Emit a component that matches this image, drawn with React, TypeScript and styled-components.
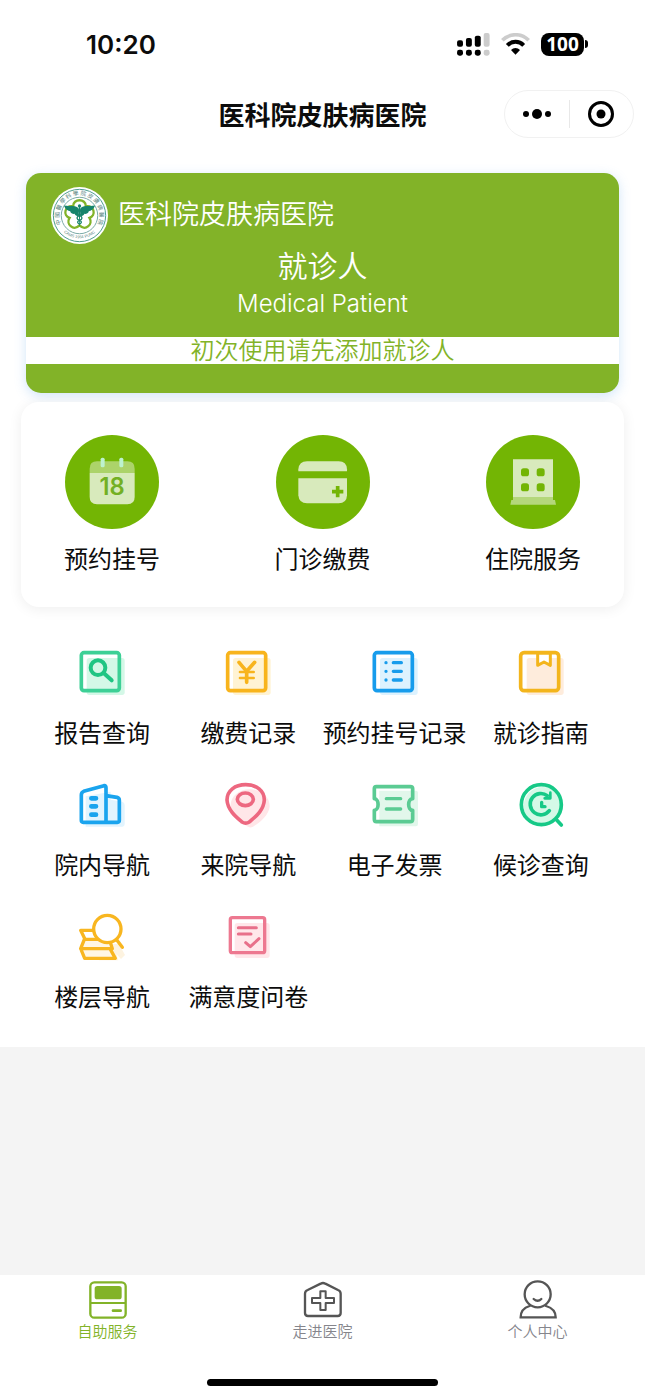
import React from "react";
import styled, { createGlobalStyle } from "styled-components";

const GlobalStyle = createGlobalStyle`
  *, *::before, *::after { box-sizing: border-box; }
  body {
    margin: 0;
    background: #f4f4f4;
    color: #0c0c0c;
    font-family: "Noto Sans CJK SC", sans-serif;
  }
  button { font: inherit; color: inherit; border: 0; background: none; padding: 0; cursor: pointer; }
  a { color: inherit; text-decoration: none; }
  h1, h2, p { margin: 0; font-weight: inherit; }
  svg { display: block; }
`;

const Page = styled.div`
  min-height: 100vh;
  display: flex;
  flex-direction: column;
`;

const StatusBar = styled.div`
  height: 88px;
  padding: 0 57px 0 86px;
  display: flex;
  align-items: center;
  justify-content: space-between;
  background: #fff;
`;

const Clock = styled.time`
  padding-top: 1px;
  font: 600 26px/32px Inter, sans-serif;
`;

const Indicators = styled.div`
  display: flex;
  align-items: center;
  gap: 11px;
`;

const Battery = styled.div`
  display: flex;
  align-items: center;
  gap: 1px;
`;

const BatteryBody = styled.span`
  width: 43px;
  height: 23px;
  border-radius: 8px;
  background: #000;
  color: #fff;
  text-align: center;
  font: 700 19px/23px "Noto Sans", sans-serif;
`;

const BatteryCap = styled.span`
  width: 3px;
  height: 8px;
  border-radius: 0 4px 4px 0;
  background: #000;
`;

const NavBar = styled.header`
  padding: 2px 11px 35px;
  display: grid;
  grid-template-columns: 1fr auto 1fr;
  align-items: center;
  background: #fff;
`;

const NavTitle = styled.h1`
  grid-column: 2;
  font-size: 26px;
  line-height: 38px;
  font-weight: 700;
`;

const Capsule = styled.div`
  justify-self: end;
  width: 130px;
  height: 48px;
  display: flex;
  align-items: center;
  border: 1px solid #f1f1f1;
  border-radius: 24px;
`;

const CapsuleButton = styled.button`
  flex: 1;
  display: flex;
  justify-content: center;
  & + & { border-left: 1px solid #e8e8e8; }
`;

const Content = styled.main`
  padding-bottom: 33px;
  background: #fff;
`;

const PatientCard = styled.section`
  margin: 0 26px;
  padding: 14px 0 29px;
  border-radius: 15px;
  background: #82b328;
  color: #fff;
  box-shadow: 0 3px 12px rgba(90, 160, 230, 0.28);
  text-align: center;
  font-weight: 350;
`;

const CardHead = styled.div`
  display: flex;
  align-items: center;
  gap: 10px;
  padding-left: 25px;
`;

const HospitalName = styled.p`
  font-size: 27px;
  line-height: 40px;
  padding-bottom: 6px;
`;

const CardTitle = styled.h2`
  font-size: 30px;
  line-height: 40px;
`;

const CardSubtitle = styled.p`
  font: 300 24px/40px Inter, sans-serif;
  padding-bottom: 13px;
`;

const AddPatient = styled.button`
  display: block;
  width: 100%;
  padding-bottom: 3px;
  background: #fff;
  color: #82b328;
  font-size: 24px;
  line-height: 24px;
`;

const ServicePanel = styled.section`
  margin: 9px 21px 0;
  padding: 33px 43px 31px;
  display: flex;
  justify-content: space-between;
  border-radius: 18px;
  background: #fff;
  box-shadow: 0 2px 14px rgba(0, 0, 0, 0.07);
`;

const ServiceLink = styled.a`
  display: flex;
  flex-direction: column;
  align-items: center;
  gap: 11px;
  font-size: 24px;
  line-height: 36px;
`;

const FeatureGrid = styled.nav`
  margin: 42px 31px 0 29px;
  display: grid;
  grid-template-columns: repeat(4, 1fr);
  row-gap: 31px;
`;

const FeatureLink = styled.a`
  display: flex;
  flex-direction: column;
  align-items: center;
  gap: 17px;
  white-space: nowrap;
  font-size: 24px;
  line-height: 36px;
`;

const Footer = styled.footer`
  margin-top: auto;
  padding: 5px 0 12px;
  background: #fff;
`;

const TabBar = styled.nav`
  display: grid;
  grid-template-columns: repeat(3, 1fr);
`;

const Tab = styled.a<{ $active?: boolean }>`
  display: flex;
  flex-direction: column;
  align-items: center;
  font-size: 15px;
  line-height: 22px;
  font-weight: 350;
  color: ${(p) => (p.$active ? "#82b328" : "#85858c")};
`;

const HomeIndicator = styled.div`
  width: 231px;
  height: 7px;
  margin: 37px auto 0;
  border-radius: 4px;
  background: #000;
`;

const SignalIcon = () => (
  <svg width="33" height="23" viewBox="53 35 100 70" aria-hidden="true">
    <g fill="#000">
      <rect x="53" y="57" width="18" height="20" rx="6" />
      <rect x="80" y="50" width="18" height="27" rx="6" />
      <rect x="107" y="43" width="18" height="34" rx="6" />
      <rect x="53" y="86" width="18" height="18" rx="7" />
      <rect x="80" y="86" width="18" height="18" rx="7" />
      <rect x="107" y="86" width="18" height="18" rx="7" />
    </g>
    <g fill="#ccc">
      <rect x="134" y="35" width="18" height="42" rx="6" />
      <rect x="134" y="86" width="18" height="18" rx="7" />
    </g>
  </svg>
);

const WifiIcon = () => (
  <svg width="29" height="22" viewBox="185 37 87 66" fill="none" aria-hidden="true">
    <path d="M189 59A55 55 0 0 1 268 59" stroke="#ccc" strokeWidth="11" />
    <path d="M204 74A34 34 0 0 1 253 74" stroke="#000" strokeWidth="12" />
    <path d="M228.500 102L215 88A19 19 0 0 1 242 88Z" fill="#000" />
  </svg>
);

const wing = "M84 66C76 53 60 60 39 56C43 68 52 72 58 73C59 79 66 82 71 81C73 88 80 88 84 88Z";

const HospitalLogo = () => (
  <svg width="57" height="57" viewBox="0 0 172 172" aria-hidden="true">
    <defs>
      <path id="ring-top" d="M42.900 129.100A61 61 0 1 1 129.100 129.100" />
      <path id="ring-bottom" d="M27 124A72 72 0 0 0 145 124" />
    </defs>
    <circle cx="86" cy="86" r="86" fill="#fff" />
    <circle cx="86" cy="86" r="79" fill="none" stroke="#4d9c8d" strokeWidth="3" />
    <circle cx="86" cy="86" r="55" fill="none" stroke="#79a9a5" strokeWidth="3" />
    <path
      d="M67 58C66 34 106 34 105 58C131 55 137 86 116 93C128 112 105 134 86 116C67 134 44 112 56 93C35 86 41 55 67 58Z"
      fill="#fff"
      stroke="#82b328"
      strokeWidth="7"
    />
    <g fill="#17846b">
      <path d={wing} />
      <path d={wing} transform="translate(172 0) scale(-1 1)" />
      <circle cx="86" cy="57" r="5" />
      <path d="M84 60H88L87 118H85Z" />
    </g>
    <path
      d="M78 68C98 74 98 82 86 86C76 90 76 97 86 101C94 104 93 109 86 112M94 68C74 74 74 82 86 86C96 90 96 97 86 101C78 104 79 109 86 112"
      fill="none"
      stroke="#17846b"
      strokeWidth="4"
    />
    <text fontSize="17" fill="#557f7b" fontWeight="400" textAnchor="middle">
      <textPath href="#ring-top" startOffset="50%">中 國 醫 學 科 學 院 皮 膚 病 醫 院</textPath>
    </text>
    <text fontSize="12" fill="#557f7b" fontFamily="Liberation Sans, sans-serif" textAnchor="middle">
      <textPath href="#ring-bottom" startOffset="50%">CAMS 1954 PUMC</textPath>
    </text>
  </svg>
);

const Disc = ({ viewBox, cx, cy, children }: { viewBox: string; cx: number; cy: number; children: React.ReactNode }) => (
  <svg width="94" height="94" viewBox={viewBox} aria-hidden="true">
    <circle cx={cx} cy={cy} r="141" fill="#73b504" />
    {children}
  </svg>
);

const CalendarIcon = () => (
  <Disc viewBox="43 29 282 282" cx={184} cy={170}>
    <path d="M117 143V130Q117 108 139 108H230Q252 108 252 130V143Z" fill="#acd36a" />
    <path d="M117 143H252V215Q252 237 230 237H139Q117 237 117 215Z" fill="#d8eabc" />
    <rect x="150" y="97" width="12" height="29" rx="5" fill="#bdf2cf" />
    <rect x="206" y="97" width="12" height="29" rx="5" fill="#bdf2cf" />
    <text x="184" y="210" textAnchor="middle" fontFamily="Inter, sans-serif" fontWeight="600" fontSize="71" fill="#73b023">18</text>
  </Disc>
);

const PaymentCardIcon = () => (
  <Disc viewBox="678 29 282 282" cx={819} cy={170}>
    <path d="M745 138V132Q747 108 771 108H866Q890 108 891 132V138Z" fill="#d8eabc" />
    <path d="M745 159H891V210Q890 234 866 234H771Q747 234 745 210Z" fill="#d8eabc" />
    <path d="M863 182V216M846 199H880" stroke="#73b504" strokeWidth="11" />
  </Disc>
);

const WardIcon = () => (
  <Disc viewBox="45 32 282 282" cx={186} cy={173}>
    <path d="M126 105H246V218H126Z" fill="#d8eabc" />
    <path d="M126 218H246V227H252L255 241H118L121 227H126Z" fill="#b4d77b" />
    <g fill="#73b504">
      <rect x="150" y="132" width="24" height="24" rx="8" />
      <rect x="197" y="132" width="24" height="24" rx="8" />
      <rect x="150" y="177" width="24" height="24" rx="8" />
      <rect x="197" y="177" width="24" height="24" rx="8" />
    </g>
  </Disc>
);

const FeatureSvg = styled.svg.attrs({ width: 48, height: 48, fill: "none", "aria-hidden": true })`
  stroke-linecap: round;
  stroke-linejoin: round;
`;

const ReportIcon = () => (
  <FeatureSvg viewBox="57 30 144 144">
    <rect x="83" y="57" width="114" height="111" rx="8" fill="#d4f8e7" />
    <rect x="67" y="41" width="114" height="114" rx="8" stroke="#3dd096" strokeWidth="11" />
    <circle cx="117" cy="86" r="22" stroke="#20c583" strokeWidth="12" />
    <path d="M134 102L158 124" stroke="#20c583" strokeWidth="12" />
  </FeatureSvg>
);

const BillIcon = () => (
  <FeatureSvg viewBox="495 30 144 144">
    <rect x="522" y="57" width="113" height="111" rx="8" fill="#fff3d3" />
    <rect x="506" y="41" width="114" height="114" rx="8" stroke="#f8b41c" strokeWidth="11" />
    <path d="M540 70L563 97L587 70M563 97V130" stroke="#f8b41c" strokeWidth="11" />
    <path d="M543 99H584M543 117H584" stroke="#f8b41c" strokeWidth="8" />
  </FeatureSvg>
);

const ListIcon = () => (
  <FeatureSvg viewBox="33 30 144 144">
    <rect x="60" y="57" width="113" height="111" rx="8" fill="#ddf2fe" />
    <rect x="43" y="41" width="114" height="114" rx="8" stroke="#179cec" strokeWidth="11" />
    <path d="M78 71V71.100M78 97V97.100M78 123V123.100M100 71H124M100 97H124M100 123H124" stroke="#179cec" strokeWidth="10" />
  </FeatureSvg>
);

const GuideIcon = () => (
  <FeatureSvg viewBox="471 30 144 144">
    <rect x="500" y="57" width="111" height="111" rx="8" fill="#feecdc" />
    <path d="M533 42V79L552 69L571 79V42Z" fill="#fff" stroke="#f3b51c" strokeWidth="9" />
    <rect x="482" y="41" width="114" height="114" rx="10" stroke="#f3b51c" strokeWidth="11" />
  </FeatureSvg>
);

const BuildingIcon = () => (
  <FeatureSvg viewBox="57 36 144 144">
    <path d="M80 82L155 68V92L190 98Q197 100 197 108V166Q197 173 190 173H80Z" fill="#e2f4fe" />
    <path d="M67 78Q67 70 74 67L135 50Q141 49 141 56V160H73Q67 160 67 154ZM141 80L174 85Q181 87 181 94V154Q181 160 175 160H141" stroke="#1aa4ee" strokeWidth="11" />
    <path d="M97 88H111M97 112H111M97 137H111" stroke="#1aa4ee" strokeWidth="14" />
  </FeatureSvg>
);

const PinIcon = () => (
  <FeatureSvg viewBox="495 36 144 144">
    <path d="M572 61C607 61 632 82 632 112C630 140 600 163 582 173Q573 178 564 172C545 160 515 135 515 109C515 82 540 61 572 61Z" fill="#ffe6e8" />
    <path d="M560 47C593 47 616 65 616 93C614 125 588 144 571 159Q560 166 549 159C533 145 506 124 504 93C504 65 528 47 560 47Z" stroke="#ed6880" strokeWidth="11" />
    <ellipse cx="559" cy="91" rx="24" ry="19" stroke="#ed6880" strokeWidth="11" />
  </FeatureSvg>
);

const TicketIcon = () => (
  <FeatureSvg viewBox="33 36 144 144">
    <path d="M58 65H168Q174 65 174 71V165Q174 172 168 172H58Z" fill="#e2f7eb" />
    <path d="M43 59Q43 53 49 53H151Q158 53 158 59V89C142 90 142 123 158 124V151Q158 158 151 158H49Q43 158 43 151V124C58 123 58 90 43 89Z" stroke="#5bcb93" strokeWidth="11" />
    <path d="M79 89H122M79 120H122" stroke="#5bcb93" strokeWidth="10" />
  </FeatureSvg>
);

const QueueIcon = () => (
  <FeatureSvg viewBox="471 36 144 144">
    <circle cx="548" cy="111" r="57" fill="#d4f9e7" />
    <circle cx="544" cy="107" r="60" stroke="#16c987" strokeWidth="11" />
    <path d="M588 151L604 168" stroke="#16c987" strokeWidth="11" />
    <path d="M568 125A32 32 0 1 1 562 80" stroke="#16c987" strokeWidth="11" />
    <path d="M571 71V88H554" stroke="#16c987" strokeWidth="8" />
    <path d="M545 100V113H555" stroke="#16c987" strokeWidth="10" />
  </FeatureSvg>
);

const FloorIcon = () => (
  <FeatureSvg viewBox="57 42 144 144">
    <path d="M140 135H180L198 168L186 180L172 165L178 184H120Z" fill="#fdf3e0" />
    <path d="M76 121H151L160 149H65ZM65 149H153L169 178H77Z" fill="#fff6e4" stroke="#f8b620" strokeWidth="10" />
    <path d="M104 94H65L78 121" stroke="#f8b620" strokeWidth="10" />
    <circle cx="145" cy="90" r="41" fill="#fff" stroke="#f8b620" strokeWidth="10" />
    <path d="M174 124L190 145" stroke="#f8b620" strokeWidth="10" />
  </FeatureSvg>
);

const SurveyIcon = () => (
  <FeatureSvg viewBox="495 42 144 144">
    <rect x="527" y="72" width="105" height="105" rx="8" fill="#ffe7ea" />
    <rect x="514" y="56" width="103" height="105" rx="6" stroke="#ed7890" strokeWidth="10" />
    <path d="M538 86H592M538 105H576M560 131L574 143L600 119" stroke="#e8708a" strokeWidth="9" />
  </FeatureSvg>
);

const KioskIcon = () => (
  <svg width="40" height="40" viewBox="82 32 120 120" fill="none" aria-hidden="true">
    <rect x="89" y="39" width="106" height="106" rx="12" stroke="#82b328" strokeWidth="7" />
    <rect x="102" y="50" width="81" height="40" rx="8" fill="#82b328" />
    <path d="M89 101H195" stroke="#82b328" strokeWidth="6" />
    <path d="M157 124H180" stroke="#82b328" strokeWidth="8" strokeLinecap="round" />
  </svg>
);

const HospitalIcon = () => (
  <svg width="40" height="40" viewBox="727 32 120 120" fill="none" stroke="#555" strokeWidth="7" strokeLinejoin="round" aria-hidden="true">
    <path d="M733 73Q733 65 741 62L780 43Q787 39 794 43L832 62Q840 65 840 73V131Q840 140 831 140H742Q733 140 733 131Z" />
    <path d="M779 66H795V86H820V101H795V122H779V101H754V86H779Z" strokeWidth="6" />
  </svg>
);

const ProfileIcon = () => (
  <svg width="40" height="40" viewBox="111 32 120 120" fill="none" stroke="#555" strokeWidth="7" strokeLinecap="round" aria-hidden="true">
    <circle cx="170" cy="75" r="39" />
    <path d="M158 89Q170 100 181 89" />
    <path d="M146 110C129 115 119 126 119 144H224C224 126 212 115 195 110" />
  </svg>
);

const services = [
  { label: "预约挂号", Icon: CalendarIcon },
  { label: "门诊缴费", Icon: PaymentCardIcon },
  { label: "住院服务", Icon: WardIcon },
];

const features = [
  { label: "报告查询", Icon: ReportIcon },
  { label: "缴费记录", Icon: BillIcon },
  { label: "预约挂号记录", Icon: ListIcon },
  { label: "就诊指南", Icon: GuideIcon },
  { label: "院内导航", Icon: BuildingIcon },
  { label: "来院导航", Icon: PinIcon },
  { label: "电子发票", Icon: TicketIcon },
  { label: "候诊查询", Icon: QueueIcon },
  { label: "楼层导航", Icon: FloorIcon },
  { label: "满意度问卷", Icon: SurveyIcon },
];

const tabs = [
  { label: "自助服务", Icon: KioskIcon, active: true },
  { label: "走进医院", Icon: HospitalIcon },
  { label: "个人中心", Icon: ProfileIcon },
];

export default function App() {
  return (
    <>
      <GlobalStyle />
      <Page>
        <StatusBar>
          <Clock>10:20</Clock>
          <Indicators>
            <SignalIcon />
            <WifiIcon />
            <Battery>
              <BatteryBody>100</BatteryBody>
              <BatteryCap />
            </Battery>
          </Indicators>
        </StatusBar>
        <NavBar>
          <NavTitle>医科院皮肤病医院</NavTitle>
          <Capsule>
            <CapsuleButton aria-label="更多">
              <svg width="28" height="28" viewBox="0 0 28 28">
                <circle cx="3" cy="14" r="3" />
                <circle cx="14" cy="14" r="5" />
                <circle cx="25" cy="14" r="3" />
              </svg>
            </CapsuleButton>
            <CapsuleButton aria-label="关闭">
              <svg width="28" height="28" viewBox="0 0 28 28">
                <circle cx="14" cy="14" r="11.500" fill="none" stroke="#000" strokeWidth="3" />
                <circle cx="14" cy="14" r="4.500" />
              </svg>
            </CapsuleButton>
          </Capsule>
        </NavBar>
        <Content>
          <PatientCard>
            <CardHead>
              <HospitalLogo />
              <HospitalName>医科院皮肤病医院</HospitalName>
            </CardHead>
            <CardTitle>就诊人</CardTitle>
            <CardSubtitle>Medical Patient</CardSubtitle>
            <AddPatient>初次使用请先添加就诊人</AddPatient>
          </PatientCard>
          <ServicePanel>
            {services.map(({ label, Icon }) => (
              <ServiceLink href="#" key={label}>
                <Icon />
                {label}
              </ServiceLink>
            ))}
          </ServicePanel>
          <FeatureGrid>
            {features.map(({ label, Icon }) => (
              <FeatureLink href="#" key={label}>
                <Icon />
                {label}
              </FeatureLink>
            ))}
          </FeatureGrid>
        </Content>
        <Footer>
          <TabBar>
            {tabs.map(({ label, Icon, active }) => (
              <Tab href="#" key={label} $active={active} aria-current={active ? "page" : undefined}>
                <Icon />
                {label}
              </Tab>
            ))}
          </TabBar>
          <HomeIndicator />
        </Footer>
      </Page>
    </>
  );
}
